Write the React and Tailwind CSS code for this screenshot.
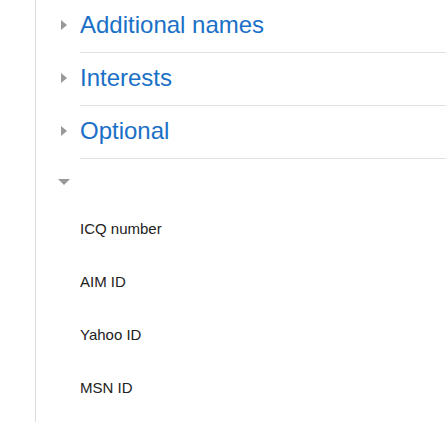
import React from "react";

function Section({ title }) {
  return (
    <div className="flex">
      <div className="w-[19px] flex items-start pt-[20px]">
        <div className="w-0 h-0 border-l-[6px] border-l-[#999] border-y-[5px] border-y-transparent" />
      </div>
      <div className="flex-1 border-b border-[#e0e0e6] pt-[11px] pb-[13px]">
        <div className="text-[24px] leading-[28px] text-[#1a70c6]">{title}</div>
      </div>
    </div>
  );
}

export default function App() {
  const labels = ["ICQ number", "AIM ID", "Yahoo ID", "MSN ID"];
  return (
    <div
      className="flex h-[422px] w-[446px] bg-white overflow-hidden"
      style={{ fontFamily: '"Liberation Sans", Arial, sans-serif' }}
    >
      <div className="w-[36px] shrink-0 border-r border-[#dcdcdc]" />
      <div className="flex-1 pl-[25px]">
        <Section title="Additional names" />
        <Section title="Interests" />
        <Section title="Optional" />
        <div className="pt-[20px] -ml-[3px]">
          <div className="w-0 h-0 border-t-[6px] border-t-[#999] border-x-[6px] border-x-transparent" />
        </div>
        <div className="pl-[19px] mt-[34px]">
          {labels.map((l) => (
            <div key={l} className="h-[53px] text-[15px] leading-[20px] text-[#222]">
              {l}
            </div>
          ))}
        </div>
      </div>
    </div>
  );
}
